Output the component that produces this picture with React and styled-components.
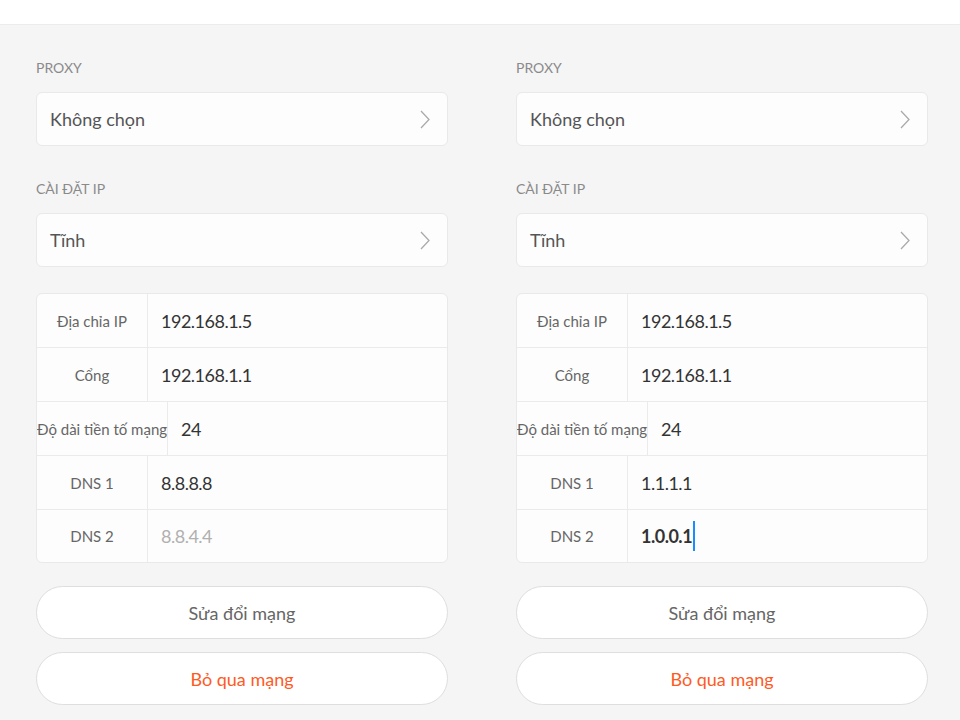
import React from "react";
import styled, { createGlobalStyle } from "styled-components";

const GlobalStyle = createGlobalStyle`
  html, body {
    margin: 0;
    padding: 0;
    background: #f5f5f5;
    font-family: "Lato", "Noto Sans", sans-serif;
  }
`;

const Page = styled.div`
  width: 960px;
  height: 720px;
  overflow: hidden;
  background: #f5f5f5;
`;

const TopBar = styled.div`
  height: 24px;
  background: #ffffff;
  border-bottom: 1px solid #ececec;
`;

const Columns = styled.div`
  display: grid;
  grid-template-columns: 1fr 1fr;
`;

const Column = styled.div`
  padding: 0 32px 0 36px;
  display: flex;
  flex-direction: column;
`;

const SectionLabel = styled.div`
  font-size: 14px;
  color: #8a8a8a;
  text-transform: uppercase;
  height: 16px;
  line-height: 16px;
  margin: 35px 0 16px;
`;

const Select = styled.div`
  height: 54px;
  box-sizing: border-box;
  background: #fdfdfd;
  border: 1px solid #e9e9e9;
  border-radius: 6px;
  display: flex;
  align-items: center;
  justify-content: space-between;
  padding: 0 17px 0 13px;
  font-size: 18px;
  color: #555;
`;

const Chevron = () => (
  <svg width="10" height="19" viewBox="0 0 10 19">
    <path d="M1 1 L9 9.5 L1 18" fill="none" stroke="#aaaaaa" strokeWidth="1.3" />
  </svg>
);

const Table = styled.div`
  margin-top: 26px;
  background: #fdfdfd;
  border: 1px solid #e9e9e9;
  border-radius: 6px;
  overflow: hidden;
`;

const Row = styled.div`
  display: flex;
  height: 53px;
  border-bottom: 1px solid #ebebeb;
  &:last-child {
    border-bottom: none;
    height: 52px;
  }
`;

const Label = styled.div`
  min-width: 110px;
  white-space: nowrap;
  border-right: 1px solid #ebebeb;
  display: flex;
  align-items: center;
  justify-content: center;
  font-size: 15px;
  color: #666;
`;

const Value = styled.div`
  flex: 1;
  display: flex;
  align-items: center;
  padding-left: 13px;
  font-size: 18px;
  letter-spacing: -0.5px;
  color: ${(p) => (p.$placeholder ? "#b0b0b0" : "#333")};
  font-weight: ${(p) => (p.$bold ? 700 : 400)};
`;

const Caret = styled.span`
  display: inline-block;
  width: 1.5px;
  height: 30px;
  background: #1a8cff;
  margin-left: 1px;
`;

const Buttons = styled.div`
  margin-top: 23px;
  display: flex;
  flex-direction: column;
  gap: 13px;
`;

const PillButton = styled.button`
  height: 53px;
  border-radius: 27px;
  background: #ffffff;
  border: 1px solid #dedede;
  font-family: inherit;
  font-size: 18px;
  color: ${(p) => (p.$danger ? "#ff5a1f" : "#666")};
`;

const Panel = ({ dns1, dns2, editing }) => (
  <Column>
    <SectionLabel>Proxy</SectionLabel>
    <Select>
      <span>Không chọn</span>
      <Chevron />
    </Select>
    <SectionLabel>Cài đặt IP</SectionLabel>
    <Select>
      <span>Tĩnh</span>
      <Chevron />
    </Select>
    <Table>
      <Row>
        <Label>Địa chỉa IP</Label>
        <Value>192.168.1.5</Value>
      </Row>
      <Row>
        <Label>Cổng</Label>
        <Value>192.168.1.1</Value>
      </Row>
      <Row>
        <Label>Độ dài tiền tố mạng</Label>
        <Value>24</Value>
      </Row>
      <Row>
        <Label>DNS 1</Label>
        <Value>{dns1}</Value>
      </Row>
      <Row>
        <Label>DNS 2</Label>
        {editing ? (
          <Value $bold>
            {dns2}
            <Caret />
          </Value>
        ) : (
          <Value $placeholder>{dns2}</Value>
        )}
      </Row>
    </Table>
    <Buttons>
      <PillButton>Sửa đổi mạng</PillButton>
      <PillButton $danger>Bỏ qua mạng</PillButton>
    </Buttons>
  </Column>
);

export default function App() {
  return (
    <Page>
      <GlobalStyle />
      <TopBar />
      <Columns>
        <Panel dns1="8.8.8.8" dns2="8.8.4.4" />
        <Panel dns1="1.1.1.1" dns2="1.0.0.1" editing />
      </Columns>
    </Page>
  );
}
